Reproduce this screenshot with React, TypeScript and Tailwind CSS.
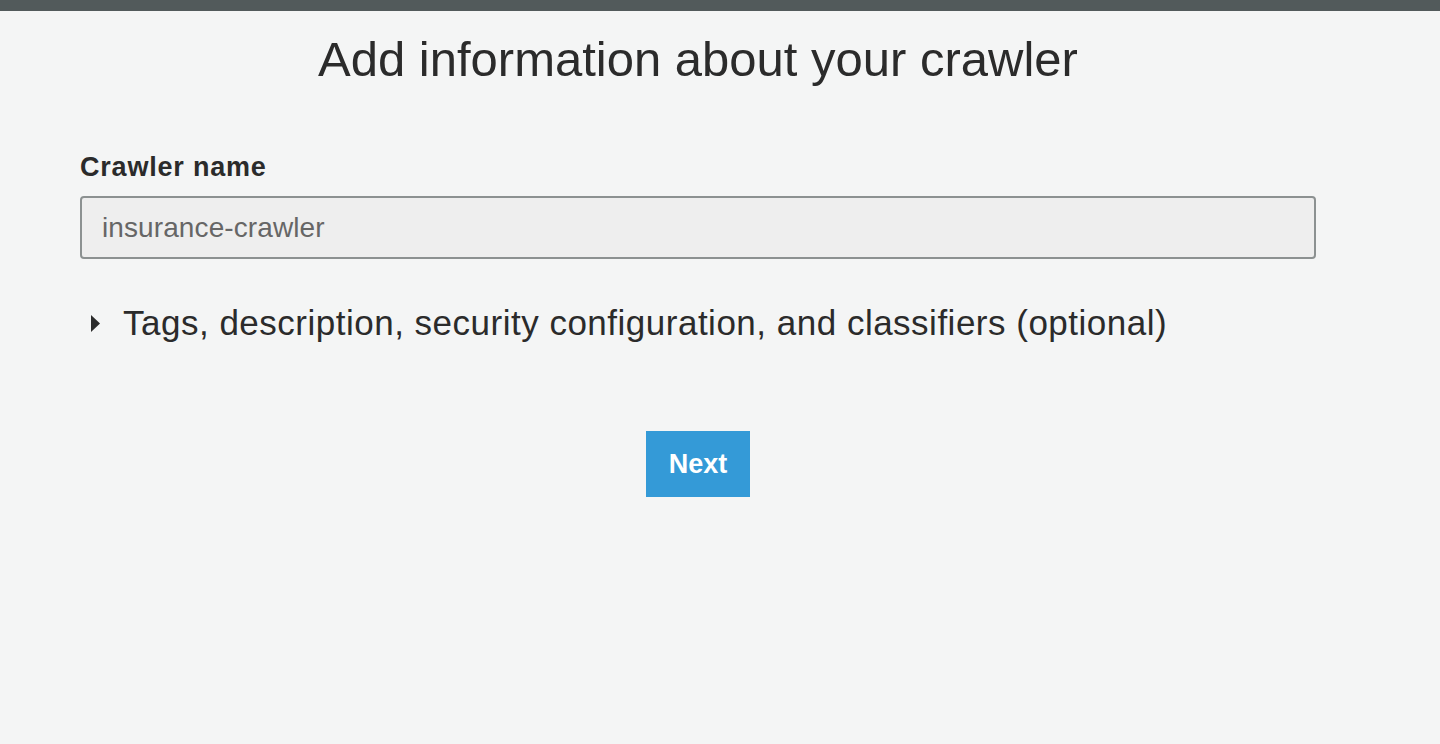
const App = () => {
  return (
    <div className="min-h-[744px] bg-[#f4f5f5] font-['Liberation_Sans',Arial,sans-serif]">
      <div className="h-[11px] bg-[#525a5b]" />
      <div className="w-[1396px] px-[80px]">
        <h1 className="pt-[20px] text-center text-[49px] leading-[56px] text-[#2b2b2b]">
          Add information about your crawler
        </h1>

        <label className="mt-[64px] block text-[27px] font-bold leading-[32px] tracking-[0.8px] text-[#2b2b2b]">
          Crawler name
        </label>
        <div className="mt-[13px] flex h-[63px] items-center rounded-[4px] border-2 border-[#8c9191] bg-[#eeeeee] px-[20px] text-[28px] tracking-[0.1px] text-[#666]">
          insurance-crawler
        </div>

        <div className="mt-[44px] flex items-center gap-[22px] pl-[10px] text-[35px] leading-[40px] tracking-[0.5px] text-[#2b2b2b]">
          <svg width="11" height="19" viewBox="0 0 11 19">
            <path d="M1 1 L10 9.5 L1 18 Z" fill="#2b2b2b" />
          </svg>
          <span>Tags, description, security configuration, and classifiers (optional)</span>
        </div>

        <div className="mt-[88px] flex justify-center">
          <button className="h-[66px] w-[104px] bg-[#349ad7] text-[27px] font-bold text-white">
            Next
          </button>
        </div>
      </div>
    </div>
  );
};

export default App;
